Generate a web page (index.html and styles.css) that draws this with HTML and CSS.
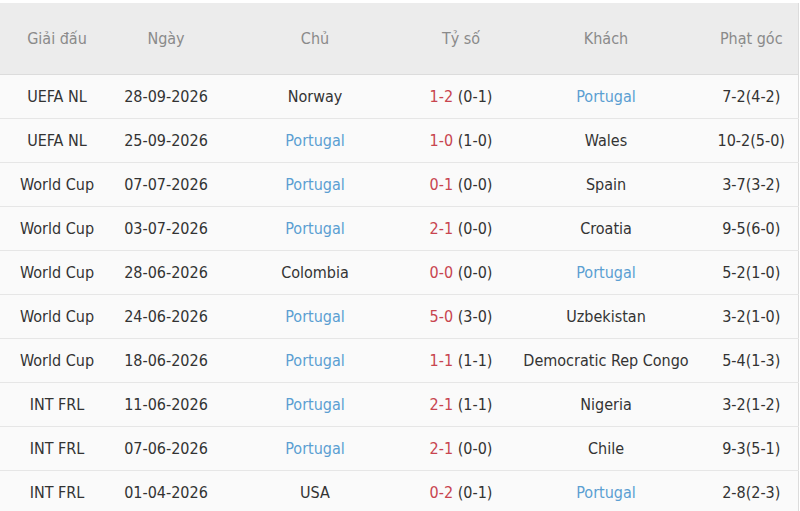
FILE: index.html
```html
<!DOCTYPE html>
<html>
<head>
<meta charset="utf-8">
<link rel="stylesheet" href="styles.css">
</head>
<body>
<div class="wrap">
<table class="matches">
  <colgroup>
    <col class="c1"><col class="c2"><col class="c3"><col class="c4"><col class="c5"><col class="c6">
  </colgroup>
  <thead>
    <tr><th>Giải đấu</th><th>Ngày</th><th>Chủ</th><th>Tỷ số</th><th>Khách</th><th class="last">Phạt góc</th></tr>
  </thead>
  <tbody>
    <tr><td>UEFA NL</td><td>28-09-2026</td><td>Norway</td><td><span class="sc">1-2</span> (0-1)</td><td class="pt">Portugal</td><td class="last">7-2(4-2)</td></tr>
    <tr><td>UEFA NL</td><td>25-09-2026</td><td class="pt">Portugal</td><td><span class="sc">1-0</span> (1-0)</td><td>Wales</td><td class="last">10-2(5-0)</td></tr>
    <tr><td>World Cup</td><td>07-07-2026</td><td class="pt">Portugal</td><td><span class="sc">0-1</span> (0-0)</td><td>Spain</td><td class="last">3-7(3-2)</td></tr>
    <tr><td>World Cup</td><td>03-07-2026</td><td class="pt">Portugal</td><td><span class="sc">2-1</span> (0-0)</td><td>Croatia</td><td class="last">9-5(6-0)</td></tr>
    <tr><td>World Cup</td><td>28-06-2026</td><td>Colombia</td><td><span class="sc">0-0</span> (0-0)</td><td class="pt">Portugal</td><td class="last">5-2(1-0)</td></tr>
    <tr><td>World Cup</td><td>24-06-2026</td><td class="pt">Portugal</td><td><span class="sc">5-0</span> (3-0)</td><td>Uzbekistan</td><td class="last">3-2(1-0)</td></tr>
    <tr><td>World Cup</td><td>18-06-2026</td><td class="pt">Portugal</td><td><span class="sc">1-1</span> (1-1)</td><td>Democratic Rep Congo</td><td class="last">5-4(1-3)</td></tr>
    <tr><td>INT FRL</td><td>11-06-2026</td><td class="pt">Portugal</td><td><span class="sc">2-1</span> (1-1)</td><td>Nigeria</td><td class="last">3-2(1-2)</td></tr>
    <tr><td>INT FRL</td><td>07-06-2026</td><td class="pt">Portugal</td><td><span class="sc">2-1</span> (0-0)</td><td>Chile</td><td class="last">9-3(5-1)</td></tr>
    <tr><td>INT FRL</td><td>01-04-2026</td><td>USA</td><td><span class="sc">0-2</span> (0-1)</td><td class="pt">Portugal</td><td class="last">2-8(2-3)</td></tr>
  </tbody>
</table>
</div>
</body>
</html>
```

FILE: styles.css
```css
html, body {
  margin: 0;
  padding: 0;
  background: #ffffff;
}
.wrap {
  padding-top: 3px;
  width: 798px;
}
.matches {
  width: 798px;
  border-collapse: collapse;
  table-layout: fixed;
  font-family: "DejaVu Sans Condensed", "DejaVu Sans", sans-serif;
  font-size: 16px;
  color: #333333;
  border-right: 1px solid #dcdcdc;
}
.c1 { width: 114px; }
.c2 { width: 104px; }
.c3 { width: 194px; }
.c4 { width: 98px; }
.c5 { width: 192px; }
.c6 { width: 96px; }
.matches th {
  background: #ececec;
  color: #8a8a8a;
  font-weight: normal;
  height: 71px;
  padding: 0;
  text-align: center;
  border-bottom: 1px solid #dcdcdc;
}
.matches td {
  background: #fafafa;
  height: 43px;
  padding: 0;
  text-align: center;
  white-space: nowrap;
  border-bottom: 1px solid #e6e6e6;
}
.matches .last {
  padding-left: 3px;
}
.sc { color: #c8454f; }
.pt { color: #5b9fd2; }
```
